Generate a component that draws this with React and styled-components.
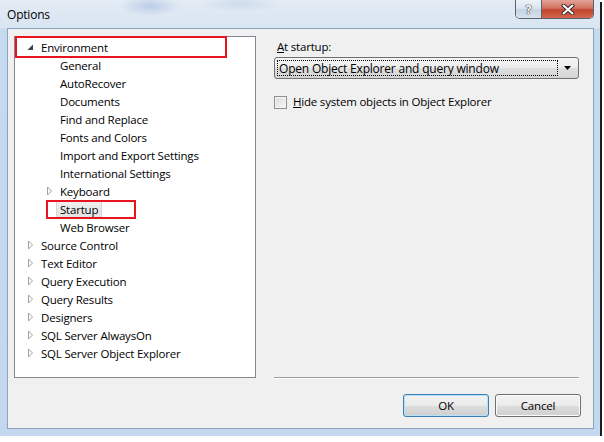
import React from 'react';
import styled, { createGlobalStyle } from 'styled-components';

const GlobalStyle = createGlobalStyle`
  html, body {
    margin: 0;
    padding: 0;
    background: #ffffff;
  }
  body {
    font-family: "Open Sans", "Noto Sans", sans-serif;
    font-size: 11.5px;
    letter-spacing: -0.2px;
    color: #000;
  }
`

const Window = styled.div`
  width: 600px;
  height: 436px;
  box-sizing: border-box;
  display: flex;
  flex-direction: column;
  padding: 0 6px 7px 7px;
  background:
    radial-gradient(ellipse 30px 10px at 150px 6px, rgba(120,150,210,0.35), transparent),
    radial-gradient(ellipse 40px 8px at 240px 4px, rgba(150,175,215,0.25), transparent),
    linear-gradient(to bottom, #e3ebf4 0px, #d9e5f2 28px, #c6daef 29px, #c3d8ee 100%);
  box-shadow: 2px 2px 0 #1e1e1e;
`

const TitleBar = styled.div`
  height: 28px;
  display: flex;
  justify-content: space-between;
  align-items: flex-start;
`

const Title = styled.div`
  padding-top: 6px;
  font-size: 12px;
  color: #000;
`

const Caption = styled.div`
  display: flex;
  height: 18px;
  border: 1px solid #5a6270;
  border-top: none;
  border-radius: 0 0 5px 5px;
  overflow: hidden;
`

const CaptionBtn = styled.div`
  width: ${p => p.$w}px;
  height: 100%;
  display: flex;
  align-items: center;
  justify-content: center;
  box-sizing: border-box;
  background: ${p => p.$close
    ? 'linear-gradient(to bottom, #e4a499 0%, #d0725f 45%, #c2452c 55%, #d4674e 100%)'
    : 'linear-gradient(to bottom, #eef3f9 0%, #dbe5f0 45%, #c6d3e2 55%, #d6e1ec 100%)'};
  border-left: ${p => p.$close ? '1px solid #5a6270' : 'none'};
  font-weight: bold;
  font-size: 12px;
  color: #fff;
  text-shadow: 0 0 1px #333, 0 0 1px #333, 0 0 1px #333;
`

const Client = styled.div`
  flex: 1;
  display: flex;
  gap: 18px;
  align-items: stretch;
  padding: 7px 12px 11px 6px;
  background: #f0f0f0;
  border: 1px solid #8ba2bd;
`

const TreePanel = styled.div`
  width: 242px;
  height: 342px;
  box-sizing: border-box;
  border: 1px solid #828790;
  background: #fff;
  padding-top: 1px;
`

const Row = styled.div`
  position: relative;
  height: 18px;
  display: flex;
  align-items: center;
  padding-left: ${p => 9 + p.$level * 19}px;
  white-space: nowrap;
`

const Toggle = styled.span`
  width: 13px;
  height: 18px;
  display: flex;
  align-items: center;
  justify-content: center;
  margin-right: 3px;
  flex-shrink: 0;
`

const Label = styled.span`
  line-height: 16px;
  padding: 1px 3px 0;
  margin-left: -3px;
  border: 1px solid ${p => p.$selected ? '#d6d6d6' : 'transparent'};
  border-radius: 2px;
  background: ${p => p.$selected ? 'linear-gradient(to bottom, #f0f0f0, #e2e2e2)' : 'transparent'};
`

const Marker = styled.div`
  position: absolute;
  left: ${p => p.$left}px;
  top: ${p => p.$top}px;
  width: ${p => p.$width}px;
  height: ${p => p.$height}px;
  box-sizing: border-box;
  border: 2px solid #e8141e;
  pointer-events: none;
`

const RightColumn = styled.div`
  flex: 1;
  display: flex;
  flex-direction: column;
`

const FieldLabel = styled.div`
  margin-top: 3px;
  line-height: 16px;
  padding-left: 3px;
`

const Combo = styled.div`
  margin-top: 2px;
  height: 22px;
  box-sizing: border-box;
  border: 1px solid #707070;
  border-radius: 3px;
  background: linear-gradient(to bottom, #f4f4f4 0%, #ececec 50%, #dfdfdf 51%, #d4d4d4 100%);
  display: flex;
  align-items: center;
  padding: 2px;
  width: 305px;
`

const ComboValue = styled.div`
  flex: 1;
  height: 16px;
  line-height: 15px;
  box-sizing: border-box;
  border: 1px dotted #000;
  padding-left: 1px;
  font-size: 12px;
`

const ComboArrow = styled.div`
  width: 18px;
  display: flex;
  align-items: center;
  justify-content: center;
`

const CheckRow = styled.label`
  margin-top: 15px;
  display: flex;
  align-items: center;
  gap: 6px;
  line-height: 16px;
`

const CheckBox = styled.span`
  width: 13px;
  height: 13px;
  box-sizing: border-box;
  border: 1px solid #8e8f8f;
  background: linear-gradient(135deg, #dcdcdc 0%, #f6f6f6 100%);
  box-shadow: inset 0 0 0 1px #f4f4f4;
`

const Separator = styled.div`
  margin-top: auto;
  height: 1px;
  background: #a0a0a0;
  border-bottom: 1px solid #fff;
  margin-right: 2px;
`

const ButtonRow = styled.div`
  margin-top: 15px;
  display: flex;
  justify-content: flex-end;
  gap: 6px;
`

const Button = styled.div`
  width: 86px;
  height: 23px;
  box-sizing: border-box;
  border: 1px solid ${p => p.$default ? '#3c7fb1' : '#707070'};
  border-radius: 3px;
  background: linear-gradient(to bottom, #f2f2f2 0%, #ebebeb 50%, #dddddd 51%, #cfcfcf 100%);
  box-shadow: inset 0 0 0 1px ${p => p.$default ? '#b6e1f7' : '#fbfbfb'};
  display: flex;
  align-items: center;
  justify-content: center;
`

const Underline = styled.span`
  text-decoration: underline;
`

const Expanded = () => (
  <svg width="7" height="7" viewBox="0 0 7 7">
    <polygon points="6,0.5 6,6 0.5,6" fill="#404040" />
  </svg>
)

const Collapsed = () => (
  <svg width="7" height="10" viewBox="0 0 7 10">
    <polygon points="1.5,1 5.5,5 1.5,9" fill="#fff" stroke="#a0a0a0" strokeWidth="1" />
  </svg>
)

const tree = [
  { label: 'Environment', level: 0, open: true, marker: { left: 0, top: -2, width: 212, height: 22 } },
  { label: 'General', level: 1 },
  { label: 'AutoRecover', level: 1 },
  { label: 'Documents', level: 1 },
  { label: 'Find and Replace', level: 1 },
  { label: 'Fonts and Colors', level: 1 },
  { label: 'Import and Export Settings', level: 1 },
  { label: 'International Settings', level: 1 },
  { label: 'Keyboard', level: 1, closed: true },
  { label: 'Startup', level: 1, selected: true, marker: { left: 31, top: 0, width: 90, height: 19 } },
  { label: 'Web Browser', level: 1 },
  { label: 'Source Control', level: 0, closed: true },
  { label: 'Text Editor', level: 0, closed: true },
  { label: 'Query Execution', level: 0, closed: true },
  { label: 'Query Results', level: 0, closed: true },
  { label: 'Designers', level: 0, closed: true },
  { label: 'SQL Server AlwaysOn', level: 0, closed: true },
  { label: 'SQL Server Object Explorer', level: 0, closed: true },
]

export default function App() {
  return (
    <>
      <GlobalStyle />
      <Window>
        <TitleBar>
          <Title>Options</Title>
          <Caption>
            <CaptionBtn $w={25}>?</CaptionBtn>
            <CaptionBtn $w={52} $close>
              <svg width="14" height="11" viewBox="0 0 14 11">
                <path d="M2.5 1.5 L11.5 9.5 M11.5 1.5 L2.5 9.5" stroke="#3a2a2a" strokeWidth="4" strokeLinecap="round" />
                <path d="M2.5 1.5 L11.5 9.5 M11.5 1.5 L2.5 9.5" stroke="#fff" strokeWidth="2" strokeLinecap="round" />
              </svg>
            </CaptionBtn>
          </Caption>
        </TitleBar>
        <Client>
          <TreePanel>
            {tree.map(item => (
              <Row key={item.label} $level={item.level}>
                <Toggle>
                  {item.open && <Expanded />}
                  {item.closed && <Collapsed />}
                </Toggle>
                <Label $selected={item.selected}>{item.label}</Label>
                {item.marker && (
                  <Marker
                    $left={item.marker.left}
                    $top={item.marker.top}
                    $width={item.marker.width}
                    $height={item.marker.height}
                  />
                )}
              </Row>
            ))}
          </TreePanel>
          <RightColumn>
            <FieldLabel><Underline>A</Underline>t startup:</FieldLabel>
            <Combo>
              <ComboValue>Open Object Explorer and query window</ComboValue>
              <ComboArrow>
                <svg width="7" height="4" viewBox="0 0 7 4">
                  <polygon points="0,0 7,0 3.5,4" fill="#000" />
                </svg>
              </ComboArrow>
            </Combo>
            <CheckRow>
              <CheckBox />
              <span><Underline>H</Underline>ide system objects in Object Explorer</span>
            </CheckRow>
            <Separator />
            <ButtonRow>
              <Button $default>OK</Button>
              <Button>Cancel</Button>
            </ButtonRow>
          </RightColumn>
        </Client>
      </Window>
    </>
  )
}
